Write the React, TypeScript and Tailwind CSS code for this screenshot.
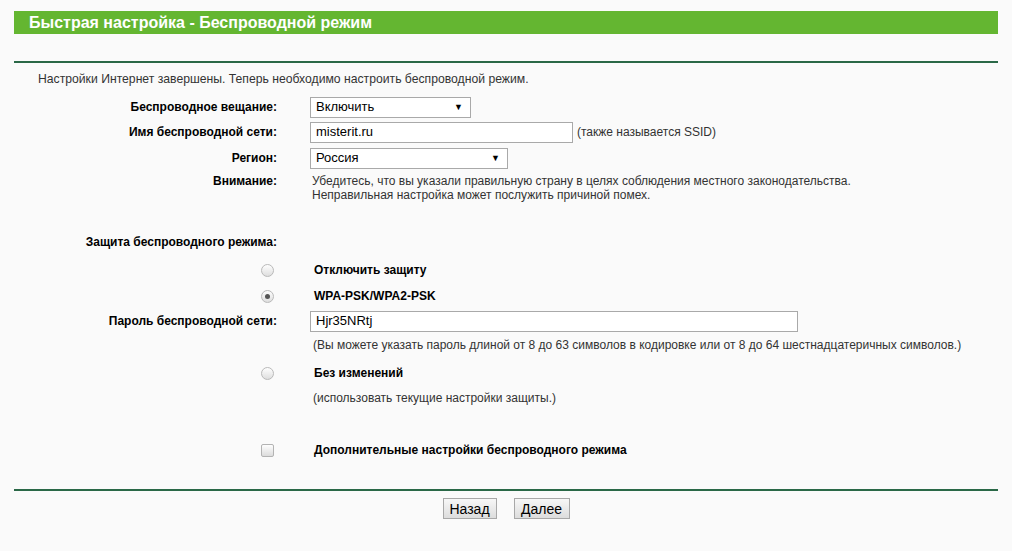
import React from "react";

const F = { fontFamily: '"Liberation Sans", Arial, sans-serif' };

function Radio({ checked }: { checked?: boolean }) {
  return (
    <span className="inline-flex h-[13px] w-[13px] items-center justify-center rounded-full border border-[#b9b9b9] bg-gradient-to-b from-[#fefefe] to-[#dedede]">
      {checked && <span className="h-[5px] w-[5px] rounded-full bg-[#555]" />}
    </span>
  );
}

function Checkbox() {
  return <span className="inline-block h-[13px] w-[13px] rounded-[2px] border border-[#b3b3b3] bg-gradient-to-b from-[#fefefe] to-[#dcdcdc]" />;
}

function Select({ value, width }: { value: string; width: string }) {
  return (
    <div className={`flex h-[21px] ${width} items-center justify-between border border-[#a9a9a9] bg-white pl-[5px] pr-[7px] text-[13px] text-black`}>
      <span>{value}</span>
      <span className="text-[9px] leading-none">▼</span>
    </div>
  );
}

function Input({ value, width }: { value: string; width: string }) {
  return (
    <div className={`flex h-[21px] ${width} items-center border border-[#a9a9a9] bg-white pl-[5px] text-[13px] text-black`}>
      {value}
    </div>
  );
}

function Row({ h, label, children, pt }: { h: string; label?: React.ReactNode; children?: React.ReactNode; pt?: string }) {
  return (
    <div className={`grid ${h} grid-cols-[263px_1fr] gap-x-[33px] ${pt ? pt + " items-start" : "items-center"}`}>
      <div className="text-right text-[12px] font-bold text-black">{label}</div>
      <div className="flex items-center">{children}</div>
    </div>
  );
}

function OptRow({ h, icon, children, bold }: { h: string; icon?: React.ReactNode; children: React.ReactNode; bold?: boolean }) {
  return (
    <div className={`grid ${h} grid-cols-[263px_1fr] items-center gap-x-[33px]`}>
      <div className="flex justify-end pr-[3px]">{icon}</div>
      <div className={bold ? "pl-[4px] font-bold text-black" : "pl-[3px]"}>{children}</div>
    </div>
  );
}

export default function App() {
  return (
    <div style={F} className="min-h-[551px] w-full bg-[#fafafa] text-[12px] leading-[14px] text-[#333]">
      <div className="mx-[14px] pt-[11px]">
        <div className="flex h-[23px] items-center bg-[#64b631] pl-[15px] text-[16px] font-bold text-white">
          Быстрая настройка - Беспроводной режим
        </div>
        <div className="mt-[27px] border-t-2 border-[#2a6847]" />

        <div className="flex h-[32px] items-center pl-[24px] text-[12.2px] text-[#333]">
          Настройки Интернет завершены. Теперь необходимо настроить беспроводной режим.
        </div>

        <Row h="h-[24px]" label="Беспроводное вещание:">
          <Select value="Включить" width="w-[161px]" />
        </Row>
        <Row h="h-[26px]" label="Имя беспроводной сети:">
          <Input value="misterit.ru" width="w-[263px]" />
          <span className="ml-[4px]">(также называется SSID)</span>
        </Row>
        <Row h="h-[26px]" label="Регион:">
          <Select value="Россия" width="w-[198px]" />
        </Row>
        <Row h="h-[31px]" pt="pt-[3px]" label="Внимание:">
          <div className="pl-[2px]">
            Убедитесь, что вы указали правильную страну в целях соблюдения местного законодательства.
            <br />
            Неправильная настройка может послужить причиной помех.
          </div>
        </Row>

        <div className="h-[33px]" />
        <Row h="h-[22px]" pt="pt-0" label="Защита беспроводного режима:" />

        <OptRow h="h-[26px]" icon={<Radio />} bold>Отключить защиту</OptRow>
        <OptRow h="h-[26px]" icon={<Radio checked />} bold>WPA-PSK/WPA2-PSK</OptRow>
        <Row h="h-[24px]" label="Пароль беспроводной сети:">
          <Input value="Hjr35NRtj" width="w-[488px]" />
        </Row>
        <OptRow h="h-[24px]">
          (Вы можете указать пароль длиной от 8 до 63 символов в кодировке или от 8 до 64 шестнадцатеричных символов.)
        </OptRow>
        <OptRow h="h-[32px]" icon={<Radio />} bold>Без изменений</OptRow>
        <OptRow h="h-[18px]">(использовать текущие настройки защиты.)</OptRow>

        <div className="h-[31px]" />
        <OptRow h="h-[24px]" icon={<Checkbox />} bold>Дополнительные настройки беспроводного режима</OptRow>

        <div className="mt-[27px] border-t-2 border-[#2a6847]" />
        <div className="mt-[7px] flex justify-center gap-[17px]">
          <button className="h-[21px] w-[54px] border border-[#a8a8a8] bg-gradient-to-b from-[#f7f7f7] to-[#dddddd] text-[14px] leading-none text-black" style={F}>
            Назад
          </button>
          <button className="h-[21px] w-[56px] border border-[#a8a8a8] bg-gradient-to-b from-[#f7f7f7] to-[#dddddd] text-[14px] leading-none text-black" style={F}>
            Далее
          </button>
        </div>
      </div>
    </div>
  );
}
